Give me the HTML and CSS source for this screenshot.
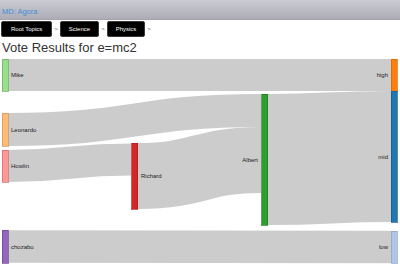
FILE: index.html
```html
<!DOCTYPE html>
<html lang="en">
<head>
    <meta charset="UTF-8">
    <meta name="viewport" content="width=device-width, initial-scale=1.0">
    <title>MD: Agora</title>
    <link rel="stylesheet" href="styles.css">
</head>
<body>
    <div class="topbar">
        <span class="brand">MD: Agora</span>
    </div>
    <div class="crumbs">
        <span class="crumb">Root Topics</span>
        <span class="sep">&gt;</span>
        <span class="crumb">Science</span>
        <span class="sep">&gt;</span>
        <span class="crumb">Physics</span>
        <span class="sep">&gt;</span>
    </div>
    <h1 class="title">Vote Results for e=mc2</h1>

    <!-- sankey of the votes, viewBox uses page coords -->
    <svg class="chart" width="400" height="208" viewBox="0 57 400 208">
        <g class="links">
            <path d="M8,75 C199.5,75 199.5,75 391,75" stroke-width="32"/>
            <path d="M8,129.5 C134.5,129.5 134.5,110.5 261,110.5" stroke-width="33"/>
            <path d="M8,166 C69.5,166 69.5,159.5 131,159.5" stroke-width="32"/>
            <path d="M138,176 C199.5,176 199.5,160 261,160" stroke-width="66"/>
            <path d="M268,159.5 C329.5,159.5 329.5,156.5 391,156.5" stroke-width="131"/>
            <path d="M8,246.5 C199.5,246.5 199.5,247 391,247" stroke-width="32.5"/>
        </g>
        <g class="nodes">
            <rect x="2" y="59" width="6" height="32" fill="#98df8a" stroke="#6fae63"/>
            <rect x="2" y="113" width="6" height="33" fill="#ffbb78" stroke="#d1945a"/>
            <rect x="2" y="150" width="6" height="32" fill="#ff9896" stroke="#d06e6c"/>
            <rect x="2" y="230" width="6" height="33" fill="#9467bd" stroke="#6d4893"/>
            <rect x="131.5" y="143" width="6" height="66" fill="#d62728" stroke="#a81d1e"/>
            <rect x="261.5" y="94" width="6" height="131" fill="#2ca02c" stroke="#217a21"/>
            <rect x="391" y="59" width="6" height="32" fill="#ff7f0e" stroke="#d06608"/>
            <rect x="391" y="91" width="6" height="131" fill="#1f77b4" stroke="#175a89"/>
            <rect x="391" y="231" width="6" height="32" fill="#aec7e8" stroke="#8aa2c2"/>
        </g>
        <g class="labels">
            <text x="11" y="75" dy=".35em">Mike</text>
            <text x="11" y="129.5" dy=".35em">Leonardo</text>
            <text x="11" y="166" dy=".35em">Howlin</text>
            <text x="11" y="246.5" dy=".35em">chozabu</text>
            <text x="141" y="176" dy=".35em">Richard</text>
            <text x="258" y="159.5" dy=".35em" class="end">Albert</text>
            <text x="388" y="75" dy=".35em" class="end">high</text>
            <text x="388" y="157" dy=".35em" class="end">mid</text>
            <text x="388" y="247" dy=".35em" class="end">low</text>
        </g>
    </svg>
</body>
</html>
```

FILE: styles.css
```css
body{
    margin: 0;
    background-color: white;
    font-family: "Liberation Sans", Arial, sans-serif;
}
.topbar{
    height: 20px;
    padding-left: 2px;
    background: linear-gradient(#cbccd1, #adacb8);
    border-bottom: 1px solid #a3a2ad;
    box-sizing: border-box;
}
.brand{
    color: #3d8fd6;
    font-size: 7.5px;
    line-height: 17px;
}
.crumbs{
    display: flex;
    align-items: center;
    height: 16px;
    margin-top: 1px;
    padding-left: 1px;
}
.crumb{
    background-color: black;
    color: white;
    font-size: 6px;
    height: 16px;
    line-height: 15px;
    padding: 0 8px;
    border-radius: 2px;
    border: 1px solid #3a3a3a;
    box-sizing: border-box;
}
.crumb:first-child{
    padding: 0 9px;
}
.sep{
    color: #666;
    font-size: 6px;
    margin: 0 2px;
}
.title{
    margin: 0;
    padding: 2px 0 0 2px;
    height: 18px;
    line-height: 18px;
    font-size: 13px;
    font-weight: normal;
    color: #333;
}
.chart{
    display: block;
}
.links path{
    fill: none;
    stroke: #cccccc;
}
.nodes rect{
    stroke-width: 0.7;
    shape-rendering: crispEdges;
}
.labels text{
    font-size: 6px;
    fill: #222;
}
.labels .end{
    text-anchor: end;
}
```
